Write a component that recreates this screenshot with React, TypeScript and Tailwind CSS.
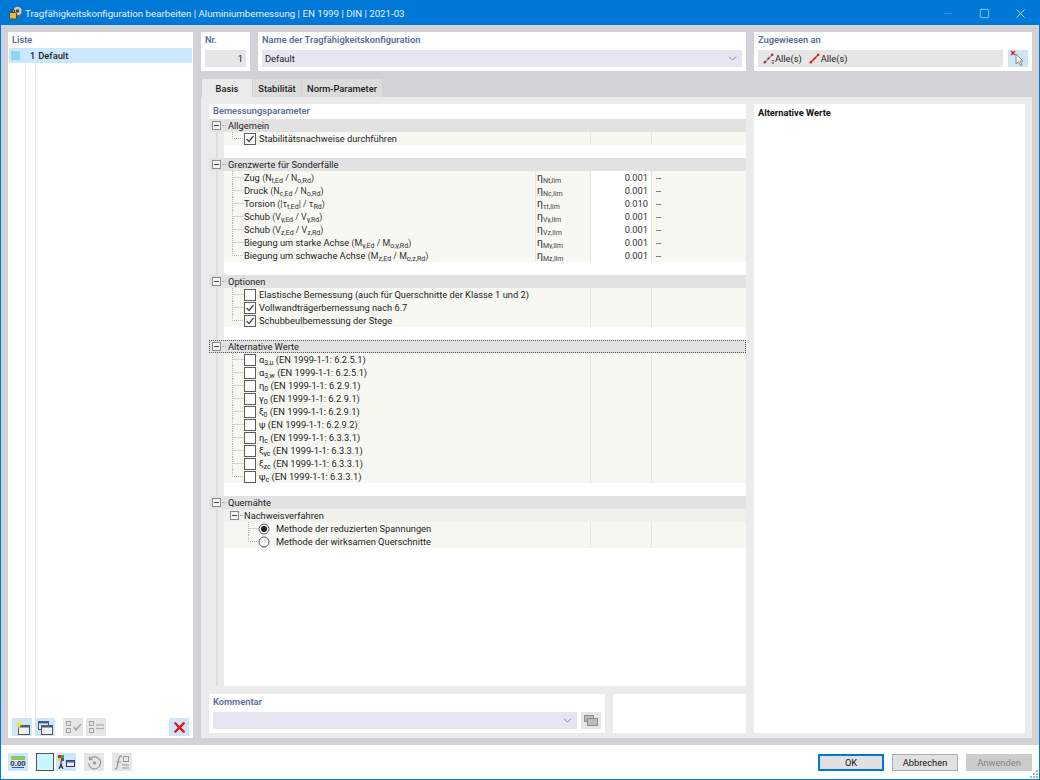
import type { ReactNode } from "react";
import { ChevronDown, Minus, Square, X } from "lucide-react";

// subscript text in the formula labels
function Sub({ children }: { children: ReactNode }) {
  return <span className="text-[7px] align-[-2px] leading-none">{children}</span>;
}

function Small({ children }: { children: ReactNode }) {
  return <span className="text-[8.8px] text-[#333]">{children}</span>;
}

function Gutter() {
  return (
    <div className="w-[15px] shrink-0 self-stretch bg-[#ebebeb] pl-[7px]">
      <div className="h-full w-[2px] bg-[#dedede]" />
    </div>
  );
}

function MinusBox() {
  return (
    <svg width="9" height="9" viewBox="0 0 9 9" className="shrink-0">
      <rect x="0.5" y="0.5" width="8" height="8" fill="#f4f4f4" stroke="#8a8a8a" />
      <path d="M2 4.5h5" stroke="#444" />
    </svg>
  );
}

function Connector({ last, w = 12 }: { last?: boolean; w?: number }) {
  return (
    <svg width={w} height="13" className="shrink-0">
      <path
        d={last ? `M0.5 0V6.5H${w}` : `M0.5 0V13M0.5 6.5H${w}`}
        stroke="#b5b5b5"
        strokeDasharray="1 1"
        fill="none"
      />
    </svg>
  );
}

function Check({ on }: { on?: boolean }) {
  return (
    <svg width="12" height="12" viewBox="0 0 12 12" className="shrink-0">
      <rect x="0.5" y="0.5" width="11" height="11" fill="#fff" stroke="#5c5c5c" />
      {on && <path d="M2.5 6l2.5 2.5 4.5-5.5" fill="none" stroke="#444" strokeWidth="1.2" />}
    </svg>
  );
}

function Radio({ on }: { on?: boolean }) {
  return (
    <svg width="12" height="12" viewBox="0 0 12 12" className="shrink-0">
      <circle cx="6" cy="6" r="5" fill="#fff" stroke="#555" />
      {on && <circle cx="6" cy="6" r="3" fill="#222" />}
    </svg>
  );
}

function Header({ label, focus }: { label: string; focus?: boolean }) {
  return (
    <div
      className={
        focus
          ? "flex h-[13px] items-center bg-[#e2e2e2] pl-[3px] outline outline-1 -outline-offset-1 outline-dotted outline-[#555]"
          : "flex h-[13px] items-center bg-[#e2e2e2] pl-[3px]"
      }
    >
      <MinusBox />
      <div className="mx-[1px] w-[4px] border-b border-dotted border-[#aaa]" />
      <span className="ml-[1px]">{label}</span>
    </div>
  );
}

function Spacer() {
  return (
    <div className="flex h-[13px]">
      <Gutter />
    </div>
  );
}

// value and unit cells shared by every row; the symbol cell only exists in the limit rows
function Cols({ value, unit }: { value?: string; unit?: string }) {
  return (
    <>
      <div
        className={
          value
            ? "h-full w-[61px] shrink-0 border-l border-[#e6e6de] bg-white pr-[3px] text-right text-[#333]"
            : "h-full w-[61px] shrink-0 border-l border-[#e6e6de]"
        }
      >
        {value}
      </div>
      <div className="h-full w-[95px] shrink-0 border-l border-[#e6e6de] pl-[4px] text-[#333]">{unit}</div>
    </>
  );
}

function Row({
  children,
  last,
  symbol,
  value,
  unit,
}: {
  children: ReactNode;
  last?: boolean;
  symbol?: ReactNode;
  value?: string;
  unit?: string;
}) {
  return (
    <div className="flex h-[13px] bg-[#f8f8f2]">
      <Gutter />
      <div className="flex h-full min-w-0 flex-1 items-center pl-[8px]">
        <Connector last={last} />
        {children}
      </div>
      {symbol && <div className="h-full w-[55px] shrink-0 border-l border-[#e6e6de] pl-[1px] text-[#333]">{symbol}</div>}
      <Cols value={value} unit={unit} />
    </div>
  );
}

function CheckRow({ on, last, children }: { on?: boolean; last?: boolean; children: ReactNode }) {
  return (
    <Row last={last}>
      <Check on={on} />
      <span className="ml-[3px] whitespace-nowrap">{children}</span>
    </Row>
  );
}

function Eta({ sub }: { sub: string }) {
  return (
    <span className="text-[10.5px]">
      η<span className="text-[7px] align-[-2px] leading-none text-[#444]">{sub}</span>
    </span>
  );
}

function RadioRow({ on, last, children }: { on?: boolean; last?: boolean; children: ReactNode }) {
  return (
    <div className="flex h-[13px] bg-[#f8f8f2]">
      <Gutter />
      <div className="flex h-full min-w-0 flex-1 items-center pl-[24px]">
        <Connector last={last} w={10} />
        <Radio on={on} />
        <span className="ml-[6px]">{children}</span>
      </div>
      <Cols />
    </div>
  );
}

function PanelLabel({ children }: { children: ReactNode }) {
  return <div className="font-semibold text-[#5b6c9a]">{children}</div>;
}

function IconBtn({ children, on, w = 20 }: { children: ReactNode; on?: boolean; w?: number }) {
  return (
    <div
      style={{ width: w }}
      className={
        on
          ? "flex h-[18px] shrink-0 items-center justify-center bg-[#cfe6f8]"
          : "flex h-[18px] shrink-0 items-center justify-center bg-[#e6e6e6]"
      }
    >
      {children}
    </div>
  );
}

function WinIcon({ star, double }: { star?: boolean; double?: boolean }) {
  return (
    <svg width="16" height="15" viewBox="0 0 16 15">
      {double && (
        <>
          <rect x="1.5" y="1.5" width="10" height="8" fill="#e8e8e8" stroke="#555" />
          <rect x="1.5" y="1.5" width="10" height="2" fill="#3f5f9f" />
        </>
      )}
      <rect x="4.5" y="5.5" width="11" height="9" fill="#f0f0f0" stroke="#555" />
      <rect x="4.5" y="5.5" width="11" height="2" fill="#3f5f9f" />
      {star && <path d="M5 0l1.2 3.3L9.5 4.5 6.2 5.7 5 9 3.8 5.7.5 4.5l3.3-1.2z" fill="#f6e52e" />}
    </svg>
  );
}

function CheckListIcon({ variant }: { variant: number }) {
  return (
    <svg width="17" height="14" viewBox="0 0 17 14" fill="none" stroke="#a2a2a2">
      <rect x="1.5" y="1.5" width="4" height="4" />
      <rect x="1.5" y="8.5" width="4" height="4" />
      {variant === 0 ? (
        <path d="M9 7l2 3 5-6" strokeWidth="1.5" />
      ) : (
        <path d="M8 5h8M8 9c2-2 4 1 8-1" />
      )}
    </svg>
  );
}

function MemberIcon({ sigma }: { sigma?: boolean }) {
  return (
    <svg width="12" height="11" viewBox="0 0 13 12" className="shrink-0">
      <path d="M1.5 10.5L9.5 2.5" stroke={sigma ? "#7c99bf" : "#cc3a3a"} strokeWidth="1.6" />
      <circle cx="2" cy="10" r="1.4" fill="#d62020" />
      <circle cx="6" cy="6" r="1.2" fill="#d62020" />
      <circle cx="10" cy="2" r="1.4" fill="#d62020" />
      {sigma && <path d="M9.5 8.5h2.5M9.5 11h2.5" stroke="#333" />}
    </svg>
  );
}

function CursorIcon() {
  return (
    <svg width="16" height="17" viewBox="0 0 16 17">
      <path d="M1 1l4 4M5 1L1 5" stroke="#d22" strokeWidth="1.4" />
      <path d="M6 4v10l2.5-2.2 2 4 1.6-.8-2-3.8H13z" fill="#f2f2f2" stroke="#8a8a8a" />
    </svg>
  );
}

function TitleIcon() {
  return (
    <svg width="16" height="16" viewBox="0 0 16 16" className="shrink-0">
      <circle cx="9.5" cy="6" r="4.6" fill="#c9c9c9" stroke="#555" strokeDasharray="2 1" />
      <circle cx="9.5" cy="6" r="1.8" fill="#2d4a7a" />
      <rect x="1.5" y="7.5" width="7" height="6.5" rx="1" fill="#e5b93a" stroke="#5a4a10" />
      <path d="M3.5 7.5V6a1.5 1.5 0 013 0v1.5" fill="none" stroke="#333" />
    </svg>
  );
}

function FooterBtn({ label, kind }: { label: string; kind?: "ok" | "off" }) {
  const cls =
    kind === "ok"
      ? "border-2 border-[#0078d7] bg-[#e1e1e1] text-[#111]"
      : kind === "off"
        ? "border border-[#cccccc] bg-[#cccccc] text-[#858585]"
        : "border border-[#adadad] bg-[#e1e1e1] text-[#111]";
  return (
    <div className={"flex h-[17px] w-[66px] items-center justify-center " + cls}>{label}</div>
  );
}

export default function App() {
  return (
    <div className="flex h-[780px] w-[1040px] flex-col overflow-hidden border border-[#0078d7] bg-white font-['Roboto','Noto_Sans',sans-serif] text-[9.3px] leading-[13px] text-[#1c1c1c]">
      {/* title bar */}
      <div className="flex h-[24px] shrink-0 items-center bg-[#0078d7] pl-[7px] text-[9.7px] text-[#e8f2fb]">
        <TitleIcon />
        <span className="ml-[1px] whitespace-nowrap">
          Tragfähigkeitskonfiguration bearbeiten | Aluminiumbemessung | EN 1999 | DIN | 2021-03
        </span>
        <div className="ml-auto mr-[1px] flex items-center">
          <div className="flex w-[36px] justify-center">
            <Minus size={13} strokeWidth={1} className="text-[#5da9e6]" />
          </div>
          <div className="flex w-[36px] justify-center">
            <Square size={11} strokeWidth={1.2} className="text-white" />
          </div>
          <div className="flex w-[36px] justify-center">
            <X size={15} strokeWidth={1.1} className="text-white" />
          </div>
        </div>
      </div>

      <div className="flex min-h-0 flex-1 gap-2 bg-[#d2d2d6] p-[7px]">
        {/* Liste */}
        <div className="flex w-[185px] shrink-0 flex-col bg-white">
          <div className="h-[16px] pl-[4px] pt-[1px]">
            <PanelLabel>Liste</PanelLabel>
          </div>
          <div className="mx-[1px] flex h-[15px] items-center bg-[#cce8ff]">
            <div className="ml-[2px] h-[9px] w-[9px] bg-[#8fd6f2]" />
            <span className="ml-[10px] font-medium">1</span>
            <span className="ml-[2px] pl-[1px] font-medium">Default</span>
          </div>
          <div className="ml-[17px] flex min-h-0 flex-1">
            <div className="w-[11px] border-x border-[#efefef]" />
            <div className="flex-1" />
          </div>
          <div className="flex h-[20px] shrink-0 items-start gap-[3px] pl-[4px]">
            <IconBtn on>
              <WinIcon star />
            </IconBtn>
            <IconBtn on>
              <WinIcon double />
            </IconBtn>
            <div className="w-[2px]" />
            <IconBtn>
              <CheckListIcon variant={0} />
            </IconBtn>
            <IconBtn>
              <CheckListIcon variant={1} />
            </IconBtn>
            <div className="ml-auto mr-[4px]">
              <IconBtn on>
                <X size={17} strokeWidth={3.4} className="text-[#e3141c]" />
              </IconBtn>
            </div>
          </div>
        </div>

        <div className="flex w-[831px] shrink-0 flex-col">
          {/* top row */}
          <div className="flex h-[39px] shrink-0 gap-2">
            <div className="w-[49px] bg-white px-[4px] pt-[1px]">
              <PanelLabel>Nr.</PanelLabel>
              <div className="mt-[4px] h-[17px] bg-[#e6e6e6] pr-[3px] text-right leading-[18px]">1</div>
            </div>
            <div className="w-[488px] bg-white px-[4px] pt-[1px]">
              <PanelLabel>Name der Tragfähigkeitskonfiguration</PanelLabel>
              <div className="mt-[4px] flex h-[17px] items-center bg-[#e6e6f2] pl-[3px] pr-[3px]">
                Default
                <ChevronDown size={13} strokeWidth={1.2} className="ml-auto text-[#555]" />
              </div>
            </div>
            <div className="w-[278px] bg-white px-[4px] pt-[1px]">
              <PanelLabel>Zugewiesen an</PanelLabel>
              <div className="mt-[4px] flex gap-[5px]">
                <div className="flex h-[17px] flex-1 items-center bg-[#e6e6e6] pl-[5px]">
                  <MemberIcon sigma />
                  <span>Alle(s)</span>
                  <span className="ml-[7px]">
                    <MemberIcon />
                  </span>
                  <span>Alle(s)</span>
                </div>
                <div className="flex h-[17px] w-[20px] items-center justify-center bg-[#cfe6f8]">
                  <CursorIcon />
                </div>
              </div>
            </div>
          </div>

          {/* tabs */}
          <div className="mt-2 flex h-[18px] shrink-0 items-stretch pl-[1px] font-medium">
            <div className="flex w-[50px] items-center justify-center bg-[#ebebeb]">Basis</div>
            <div className="ml-[1px] flex w-[48px] items-center justify-center bg-[#dcdcdc]">Stabilität</div>
            <div className="ml-[1px] flex w-[80px] items-center justify-center bg-[#dcdcdc]">Norm-Parameter</div>
          </div>

          <div className="flex min-h-0 flex-1 gap-2 bg-[#ebebeb] pb-[5px] pl-[8px] pr-[7px] pt-[7px]">
            <div className="flex w-[537px] shrink-0 flex-col gap-2">
              {/* tree */}
              <div className="flex min-h-0 flex-1 flex-col bg-white">
                <div className="h-[15px] shrink-0 pl-[4px]">
                  <PanelLabel>Bemessungsparameter</PanelLabel>
                </div>

                <Header label="Allgemein" />
                <CheckRow on last>
                  Stabilitätsnachweise durchführen
                </CheckRow>
                <Spacer />

                <Header label="Grenzwerte für Sonderfälle" />
                <Row symbol={<Eta sub="Nt,lim" />} value="0.001" unit="--">
                  <span>Zug <Small>(N<Sub>t,Ed</Sub> / N<Sub>o,Rd</Sub>)</Small></span>
                </Row>
                <Row symbol={<Eta sub="Nc,lim" />} value="0.001" unit="--">
                  <span>Druck <Small>(N<Sub>c,Ed</Sub> / N<Sub>o,Rd</Sub>)</Small></span>
                </Row>
                <Row symbol={<Eta sub="τt,lim" />} value="0.010" unit="--">
                  <span>Torsion <Small>(|τ<Sub>t,Ed</Sub>| / τ<Sub>Rd</Sub>)</Small></span>
                </Row>
                <Row symbol={<Eta sub="Vy,lim" />} value="0.001" unit="--">
                  <span>Schub <Small>(V<Sub>y,Ed</Sub> / V<Sub>y,Rd</Sub>)</Small></span>
                </Row>
                <Row symbol={<Eta sub="Vz,lim" />} value="0.001" unit="--">
                  <span>Schub <Small>(V<Sub>z,Ed</Sub> / V<Sub>z,Rd</Sub>)</Small></span>
                </Row>
                <Row symbol={<Eta sub="My,lim" />} value="0.001" unit="--">
                  <span>Biegung um starke Achse <Small>(M<Sub>y,Ed</Sub> / M<Sub>o,y,Rd</Sub>)</Small></span>
                </Row>
                <Row last symbol={<Eta sub="Mz,lim" />} value="0.001" unit="--">
                  <span>Biegung um schwache Achse <Small>(M<Sub>z,Ed</Sub> / M<Sub>o,z,Rd</Sub>)</Small></span>
                </Row>
                <Spacer />

                <Header label="Optionen" />
                <CheckRow>Elastische Bemessung (auch für Querschnitte der Klasse 1 und 2)</CheckRow>
                <CheckRow on>Vollwandträgerbemessung nach 6.7</CheckRow>
                <CheckRow on last>
                  Schubbeulbemessung der Stege
                </CheckRow>
                <Spacer />

                <Header label="Alternative Werte" focus />
                <CheckRow>α<Sub>3,u</Sub> (EN 1999-1-1: 6.2.5.1)</CheckRow>
                <CheckRow>α<Sub>3,w</Sub> (EN 1999-1-1: 6.2.5.1)</CheckRow>
                <CheckRow>η<Sub>0</Sub> (EN 1999-1-1: 6.2.9.1)</CheckRow>
                <CheckRow>γ<Sub>0</Sub> (EN 1999-1-1: 6.2.9.1)</CheckRow>
                <CheckRow>ξ<Sub>0</Sub> (EN 1999-1-1: 6.2.9.1)</CheckRow>
                <CheckRow>ψ (EN 1999-1-1: 6.2.9.2)</CheckRow>
                <CheckRow>η<Sub>c</Sub> (EN 1999-1-1: 6.3.3.1)</CheckRow>
                <CheckRow>ξ<Sub>yc</Sub> (EN 1999-1-1: 6.3.3.1)</CheckRow>
                <CheckRow>ξ<Sub>zc</Sub> (EN 1999-1-1: 6.3.3.1)</CheckRow>
                <CheckRow last>ψ<Sub>c</Sub> (EN 1999-1-1: 6.3.3.1)</CheckRow>
                <Spacer />

                <Header label="Quernähte" />
                <div className="flex h-[13px]">
                  <Gutter />
                  <div className="flex h-full flex-1 items-center bg-[#f1f1ec] pl-[6px]">
                    <MinusBox />
                    <div className="mx-[1px] w-[2px] border-b border-dotted border-[#aaa]" />
                    <span className="ml-[1px]">Nachweisverfahren</span>
                  </div>
                </div>
                <RadioRow on>Methode der reduzierten Spannungen</RadioRow>
                <RadioRow last>Methode der wirksamen Querschnitte</RadioRow>

                <div className="flex min-h-0 flex-1">
                  <Gutter />
                </div>
              </div>

              {/* Kommentar */}
              <div className="flex h-[39px] shrink-0 gap-2">
                <div className="w-[396px] bg-white px-[4px] pt-[1px]">
                  <PanelLabel>Kommentar</PanelLabel>
                  <div className="mt-[4px] flex gap-[4px]">
                    <div className="flex h-[17px] flex-1 items-center justify-end bg-[#e6e6f2] pr-[3px]">
                      <ChevronDown size={13} strokeWidth={1.2} className="text-[#555]" />
                    </div>
                    <div className="flex h-[17px] w-[20px] items-center justify-center bg-[#e6e6e6]">
                      <svg width="14" height="11" viewBox="0 0 14 11" fill="#bdbdbd" stroke="#8c8c8c">
                        <rect x="0.5" y="0.5" width="9" height="6" />
                        <rect x="3.5" y="3.5" width="10" height="7" />
                      </svg>
                    </div>
                  </div>
                </div>
                <div className="w-[133px] bg-white" />
              </div>
            </div>

            {/* Alternative Werte */}
            <div className="flex-1 bg-white pl-[4px] pt-[2px] font-bold text-[#111]">Alternative Werte</div>
          </div>
        </div>
      </div>

      {/* footer */}
      <div className="relative flex h-[34px] shrink-0 items-start bg-white pl-[7px] pt-[8px]">
        <div className="flex items-center">
          <IconBtn on>
            <svg width="18" height="15" viewBox="0 0 18 15">
              <rect x="2" y="1" width="14" height="4" fill="#8cc66a" />
              <path d="M3 12.5h12" stroke="#2c58b0" />
              <text x="9" y="11" textAnchor="middle" fontSize="8" fontWeight="700" fill="#333" fontFamily="Liberation Sans">
                0.00
              </text>
            </svg>
          </IconBtn>
          <div className="ml-[8px] h-[18px] w-[18px] border border-[#555] bg-[#c9f5ff]" />
          <div className="ml-[2px]">
            <IconBtn on>
              <svg width="17" height="15" viewBox="0 0 17 15">
                <rect x="0" y="0" width="3" height="3" fill="#d22" />
                <rect x="3" y="0" width="3" height="3" fill="#3a3" />
                <rect x="0" y="3" width="3" height="3" fill="#ec3" />
                <rect x="3" y="3" width="3" height="3" fill="#35c" />
                <path d="M3 6v3M1 14l2-5 2 5M1.5 12h3" stroke="#222" fill="none" />
                <rect x="8.5" y="5.5" width="8" height="6" fill="#eef" stroke="#335" />
                <rect x="8.5" y="5.5" width="8" height="2" fill="#3f5f9f" />
              </svg>
            </IconBtn>
          </div>
          <div className="ml-[8px]">
            <IconBtn>
              <svg width="15" height="15" viewBox="0 0 15 15" fill="none" stroke="#9a9a9a" strokeWidth="1.3">
                <path d="M3 4a6 6 0 11-1.4 4.5" />
                <path d="M2.5 1.5V4.5H5.5" />
                <circle cx="7.5" cy="8" r="1" fill="#9a9a9a" />
              </svg>
            </IconBtn>
          </div>
          <div className="ml-[8px]">
            <IconBtn>
              <svg width="17" height="15" viewBox="0 0 17 15" fill="none" stroke="#9a9a9a">
                <path d="M1 14c3 0 2-3 3-7s1-6 4-6" strokeWidth="1.3" />
                <path d="M2 7h5" />
                <rect x="9.5" y="1.5" width="5" height="5" />
                <path d="M8 10h7M8 13h7" />
              </svg>
            </IconBtn>
          </div>
        </div>
        <div className="ml-auto mr-[7px] mt-[1px] flex gap-[8px]">
          <FooterBtn label="OK" kind="ok" />
          <FooterBtn label="Abbrechen" />
          <FooterBtn label="Anwenden" kind="off" />
        </div>
        {/* resize grip */}
        <svg width="10" height="10" viewBox="0 0 10 10" className="absolute bottom-0 right-0" fill="#b5b5b5">
          <rect x="7" y="1" width="2" height="2" />
          <rect x="4" y="4" width="2" height="2" />
          <rect x="7" y="4" width="2" height="2" />
          <rect x="1" y="7" width="2" height="2" />
          <rect x="4" y="7" width="2" height="2" />
          <rect x="7" y="7" width="2" height="2" />
        </svg>
      </div>
    </div>
  );
}
